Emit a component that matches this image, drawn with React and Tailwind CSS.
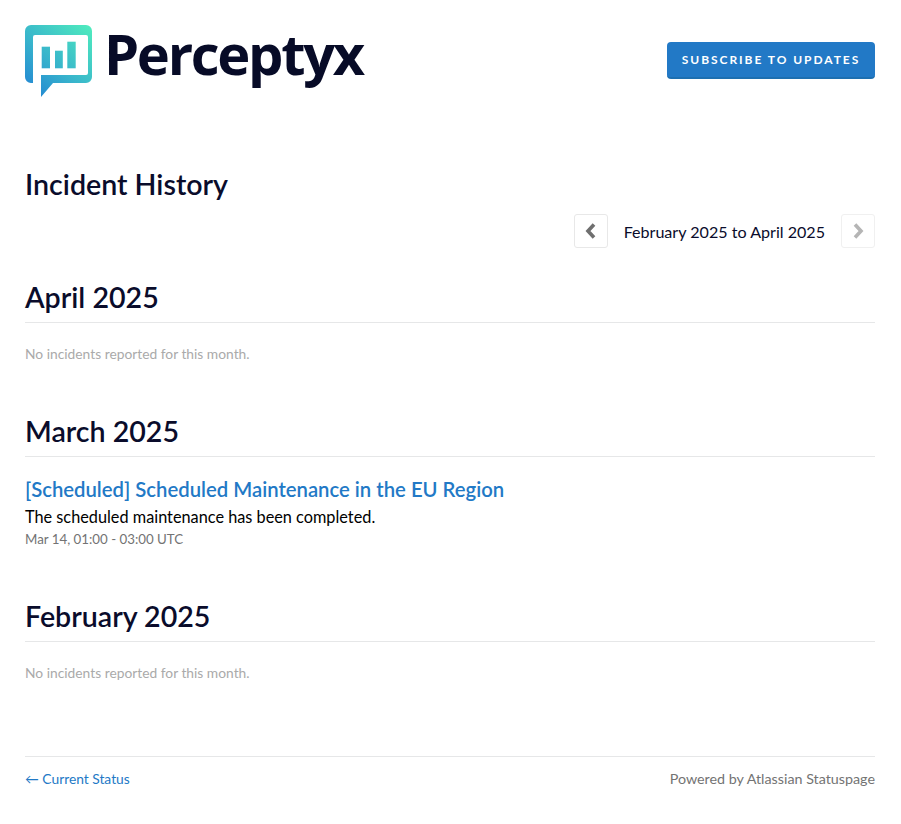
import React from "react";

const F = { fontFamily: '"Lato", "Open Sans", sans-serif' };

function LogoMark() {
  return (
    <svg width="68" height="72" viewBox="25 25 68 72" className="shrink-0">
      <defs>
        <linearGradient id="pg" x1="25" y1="97" x2="92" y2="25" gradientUnits="userSpaceOnUse">
          <stop offset="0" stopColor="#1f7fd4" />
          <stop offset="0.45" stopColor="#38b4cc" />
          <stop offset="1" stopColor="#50edbd" />
        </linearGradient>
      </defs>
      <path
        fillRule="evenodd"
        fill="url(#pg)"
        d="M31 25H86A6 6 0 0 1 92 31V77A6 6 0 0 1 86 83H53L41 97V75H86A2 2 0 0 0 88 73V37A2 2 0 0 0 86 35H35A2 2 0 0 0 33 37V83H31A6 6 0 0 1 25 77V31A6 6 0 0 1 31 25Z"
      />
      <rect x="41.7" y="46.7" width="8.3" height="21.6" fill="url(#pg)" />
      <rect x="55" y="50.7" width="7.8" height="17.6" fill="url(#pg)" />
      <rect x="67.3" y="41.7" width="8.4" height="26.6" fill="url(#pg)" />
    </svg>
  );
}

function Month({ title, children }) {
  return (
    <section>
      <h3 className="border-b border-[#e6e7e8] pb-[4px] text-[28.6px] font-semibold leading-[42px] text-[#0a0c2b]">{title}</h3>
      {children}
    </section>
  );
}

function Empty() {
  return <p className="mt-[21px] text-[13.8px] leading-[20px] text-[#aaaaaa]">No incidents reported for this month.</p>;
}

export default function App() {
  return (
    <div style={F} className="min-h-[824px] bg-white pl-[25px] pr-[26px] pt-[25px] text-[#0a0c2b]">
      <header className="flex items-start justify-between">
        <div className="flex items-start gap-[11px]">
          <LogoMark />
          <span
            className="mt-[-8px] text-[56px] font-bold leading-[72px] tracking-[-2.3px] text-[#070b27]"
            style={{ fontFamily: '"Open Sans", sans-serif' }}
          >
            Perceptyx
          </span>
        </div>
        <button className="mt-[17px] h-[37px] w-[208px] rounded-[4px] border-b-2 border-[#1d6fb0] bg-[#2279c6] pt-[1px] text-[12px] font-bold tracking-[1.95px] text-white">
          SUBSCRIBE TO UPDATES
        </button>
      </header>

      <h1 className="mt-[67px] text-[28.6px] font-semibold leading-[40px]">Incident History</h1>

      <div className="mt-[10px] flex items-center justify-end">
        <button className="flex h-[34px] w-[34px] items-center justify-center rounded-[3px] border border-[#e8e8e8] bg-white">
          <svg width="12" height="16" viewBox="0 0 12 16"><path d="M9 1.5 3 8 9 14.5" fill="none" stroke="#6f6f6f" strokeWidth="3.6" /></svg>
        </button>
        <span className="mx-[16px] pt-[2px] text-[16.1px] leading-[32px]">February 2025 to April 2025</span>
        <button className="flex h-[34px] w-[34px] items-center justify-center rounded-[3px] border border-[#f0f0f0] bg-white">
          <svg width="12" height="16" viewBox="0 0 12 16"><path d="M3 1.5 9 8 3 14.5" fill="none" stroke="#b5b5b5" strokeWidth="3.6" /></svg>
        </button>
      </div>

      <div className="mt-[28px]">
        <Month title="April 2025"><Empty /></Month>
      </div>
      <div className="mt-[46px]">
        <Month title="March 2025">
          <a className="mt-[19px] block text-[20.3px] font-semibold leading-[26px] text-[#2279c6]">[Scheduled] Scheduled Maintenance in the EU Region</a>
          <p className="mt-[3px] text-[16.3px] leading-[24px] text-black">The scheduled maintenance has been completed.</p>
          <p className="mt-0 text-[13.3px] leading-[20px] text-[#737373]">Mar 14, 01:00 - 03:00 UTC</p>
        </Month>
      </div>
      <div className="mt-[46px]">
        <Month title="February 2025"><Empty /></Month>
      </div>

      <footer className="mt-[73px] flex items-center justify-between border-t border-[#e6e7e8] pt-[12px] leading-[20px]">
        <a className="text-[13.8px] text-[#2279c6]">← Current Status</a>
        <span className="text-[14.3px] text-[#737373]">Powered by Atlassian Statuspage</span>
      </footer>
    </div>
  );
}
